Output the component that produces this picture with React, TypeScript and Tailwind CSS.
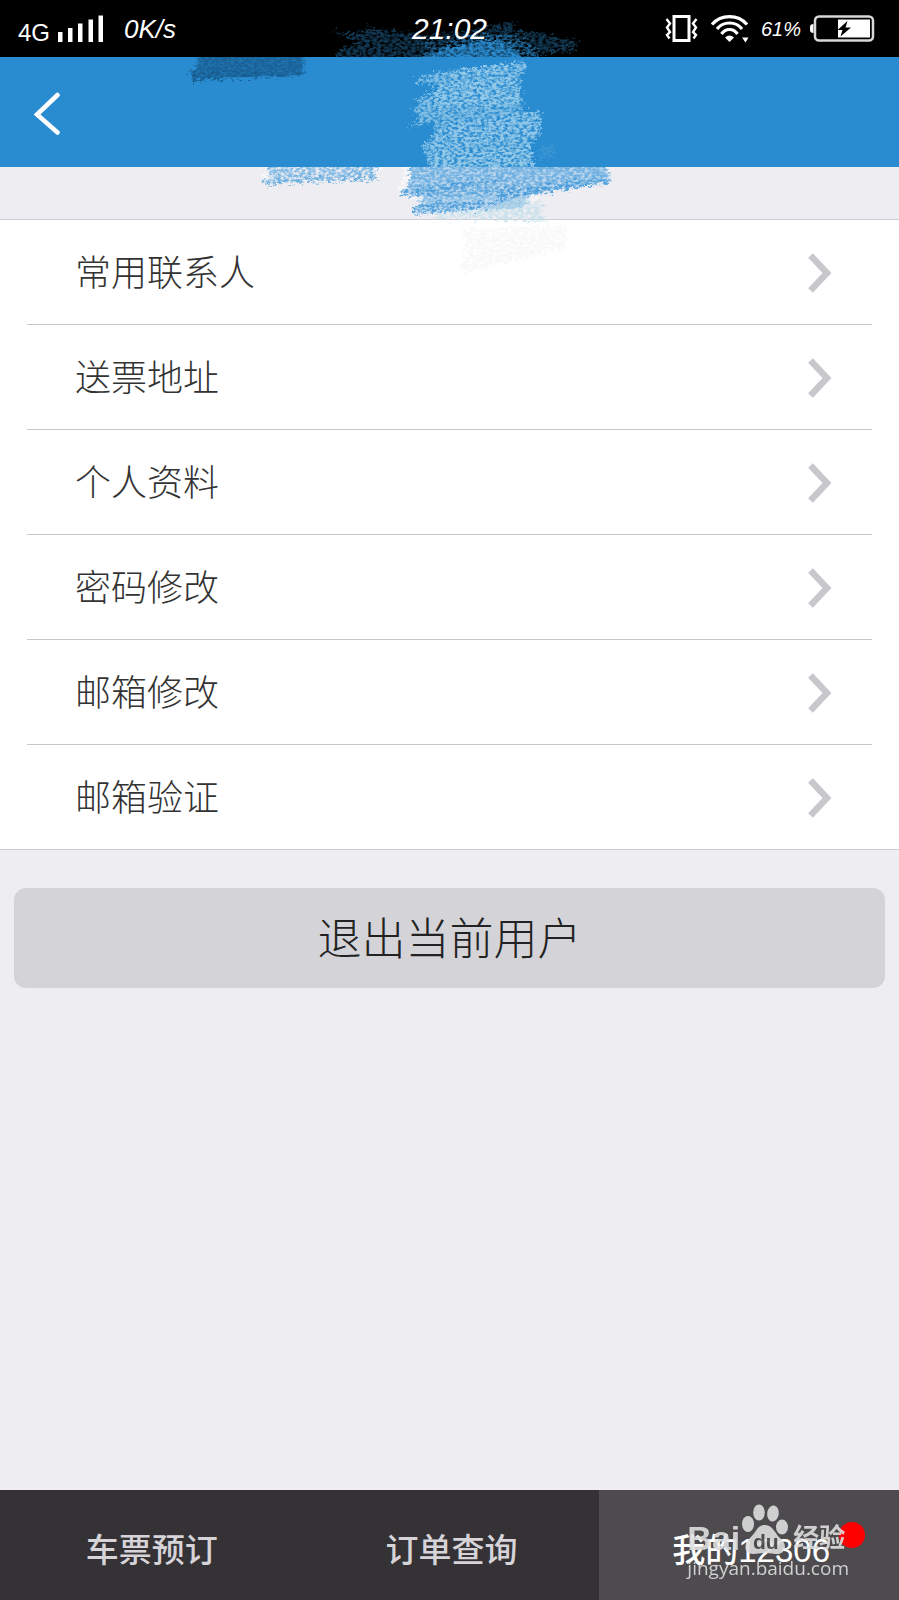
import React from 'react';

const MENU_ITEMS = ['常用联系人', '送票地址', '个人资料', '密码修改', '邮箱修改', '邮箱验证'];

const TABS = [
  { label: '车票预订', active: false },
  { label: '订单查询', active: false },
  { label: '我的12306', active: true },
];

function SignalIcon() {
  return (
    <svg width="46" height="28" viewBox="0 0 46 28" fill="#fff" aria-hidden="true">
      <rect x="0" y="17" width="4.5" height="10" />
      <rect x="10" y="13" width="4.5" height="14" />
      <rect x="20" y="8.5" width="4.5" height="18.5" />
      <rect x="30.5" y="4.5" width="4.5" height="22.5" />
      <rect x="40.5" y="0.5" width="4.5" height="26.5" />
    </svg>
  );
}

function VibrateIcon() {
  return (
    <svg width="34" height="28" viewBox="0 0 34 28" fill="none" stroke="#fff" aria-hidden="true">
      <rect x="9" y="1.5" width="15" height="24" strokeWidth="3" />
      <path d="M1.5 4 L5 8.5 L2 12.5 L5 17 L2 20 L4.5 23.5" strokeWidth="2.4" />
      <path d="M31.5 4 L28 8.5 L31 12.5 L28 17 L31 20 L28.5 23.5" strokeWidth="2.4" />
    </svg>
  );
}

function WifiIcon() {
  return (
    <svg width="38" height="28" viewBox="0 0 38 28" fill="none" stroke="#fff" strokeWidth="3.2" aria-hidden="true">
      <path d="M1 9.5 C10 -1 27 -1 36 9.5" />
      <path d="M6 14 C12 6 25 6 31 14" />
      <path d="M10.5 19 C14.5 13 22.5 13 26.5 19" />
      <path d="M14 22.5 Q18.5 18.5 23 22.5 L18.5 27 Z" fill="#fff" stroke="none" />
      <path d="M31 22.5 H37.5 L34.5 27.5 Z" fill="#fff" stroke="none" />
    </svg>
  );
}

function BatteryIcon() {
  return (
    <svg width="66" height="28" viewBox="0 0 66 28" aria-hidden="true">
      <path d="M4.5 9 Q1 9 1 12 V15 Q1 18 4.5 18 Z" fill="#fff" />
      <rect x="6" y="1.5" width="58" height="24" rx="4" fill="#000" stroke="#d8d8d8" strokeWidth="2.5" />
      <rect x="29" y="4.5" width="32" height="18" fill="#fff" />
      <path d="M38.5 6 L28.5 15 H33.5 L31.5 21.5 L42 12.5 H36.5 Z" fill="#000" />
    </svg>
  );
}

function ChevronIcon() {
  return (
    <svg width="26" height="42" viewBox="0 0 26 42" fill="none" stroke="#c8c7cc" strokeWidth="6.5" aria-hidden="true">
      <path d="M2.5 2.5 L19 20 L2.5 37.500" />
    </svg>
  );
}

// Crayon strokes that cover the title
function Scribble() {
  return (
    <svg
      className="pointer-events-none absolute left-1/2 top-0 -translate-x-1/2"
      width="899"
      height="290"
      viewBox="0 0 899 290"
      aria-hidden="true"
    >
      <defs>
        <filter id="crayon" x="-5%" y="-10%" width="110%" height="120%" colorInterpolationFilters="sRGB">
          <feTurbulence type="fractalNoise" baseFrequency="0.26 0.4" numOctaves="3" seed="4" result="noise" />
          <feColorMatrix in="noise" type="matrix" values="0 0 0 0 0  0 0 0 0 0  0 0 0 0 0  0 0 0 3.2 -0.95" result="grain" />
          <feDisplacementMap in="SourceGraphic" in2="noise" scale="14" xChannelSelector="R" yChannelSelector="G" result="rough" />
          <feComposite in="rough" in2="grain" operator="in" result="inked" />
          <feGaussianBlur in="inked" stdDeviation="0.5" />
        </filter>
        <clipPath id="band-status"><rect x="0" y="0" width="899" height="57" /></clipPath>
        <clipPath id="band-header"><rect x="0" y="57" width="899" height="110" /></clipPath>
        <clipPath id="band-gap"><rect x="0" y="167" width="899" height="60" /></clipPath>
      </defs>

      <g clipPath="url(#band-status)">
        <g filter="url(#crayon)" fill="#2a8bd0">
          <path opacity="0.4" d="M330 30 L350 34 L368 28 L432 36 L440 64 L330 64 L340 48 L362 44 Z" />
          <path opacity="0.4" d="M425 36 L470 30 L515 21 L512 30 L540 33 L577 42 L575 51 L540 54 L420 64 Z" />
          <path opacity="0.55" d="M428 56 L444 42 L480 34 L512 36 L535 48 L545 64 L428 64 Z" />
          <path opacity="0.9" d="M424 64 L446 49 L480 40 L506 42 L524 64 Z" />
        </g>
        <path opacity="0.5" fill="#2a8bd0" d="M420 57 L446 49 L482 41 L508 45 L522 57 Z" />
      </g>

      <g clipPath="url(#band-header)">
        <path opacity="0.5" fill="#185d90" d="M197 57 H302 V75 L260 76 L193 78 L190 73 L197 69 Z" />
        <g filter="url(#crayon)" fill="#185d90">
          <path opacity="0.8" d="M197 50 H303 V76 L260 77 L192 81 L188 72 L197 68 Z" />
          <path opacity="0.8" d="M190 73 L230 72 L303 71 V76 L260 77 L192 81 Z" />
        </g>
        <g filter="url(#crayon)" fill="#b4dcf0">
          <path
            opacity="0.65"
            d="M416 78 L438 72 L526 61 L524 70 L518 76 L522 98 L522 112 L541 112 L538 138 L530 144 L533 160 L536 180 H427 V155 L421 148 L433 133 L434 122 L407 127 L420 118 L412 111 L420 102 L413 100 L438 88 L432 84 L416 84 Z"
          />
          <path opacity="0.45" d="M440 72 L526 62 L524 69 L450 78 Z" />
          <path opacity="0.35" d="M436 84 L516 76 L520 104 L430 108 Z" />
          <path opacity="0.3" d="M440 124 L538 114 L536 138 L430 150 Z" />
          <path opacity="0.35" d="M430 152 L530 144 L536 176 H430 Z" />
          <path opacity="0.12" d="M538 146 L556 144 L552 158 L538 160 Z" />
        </g>
      </g>

      <g clipPath="url(#band-gap)">
        <g fill="#fff" filter="url(#crayon)">
          <path opacity="0.6" d="M261 160 H388 L374 180 L300 182 L262 184 Z" />
          <path opacity="0.6" d="M403 160 H612 L608 184 L540 195 L524 210 L412 216 L420 198 L398 196 Z" />
        </g>
        <path fill="#7fbbe6" opacity="0.45" d="M410 167 H604 L607 181 L560 189 L526 194 L522 208 L415 213 L424 196 L402 193 L411 183 Z" />
        <g filter="url(#crayon)" fill="#4398d8">
          <path opacity="0.65" d="M262 158 H378 L375 173 L376 181 L300 182 L262 186 L269 174 Z" />
          <path opacity="0.35" d="M262 179 L376 174 L376 180 L300 182 L262 185 Z" />
          <path opacity="0.65" d="M408 158 H606 L610 183 L565 190 L500 200 L498 194 L430 197 L400 195 L409 184 Z" />
          <path opacity="0.8" d="M400 190 L430 186 L496 178 L500 182 L430 196 L400 195 Z" />
          <path opacity="0.8" d="M498 190 L560 182 L610 179 L609 184 L565 190 L500 200 Z" />
          <path opacity="0.45" d="M420 198 L500 188 L530 188 L526 206 L412 212 Z" />
          <path opacity="0.8" d="M412 205 L450 202 L526 202 L522 208 L470 210 L413 215 Z" />
        </g>
        <path opacity="0.8" filter="url(#crayon)" fill="#c3dfea" d="M433 214 L475 210 L520 198 L546 204 L539 213 L547 222 L500 220 L434 219 Z" />
      </g>

      <path filter="url(#crayon)" fill="#f8f8fa" d="M463 229 L568 225 L566 248 L500 264 L460 274 L465 255 Z" />
    </svg>
  );
}

function StatusBar() {
  return (
    <header className="grid h-[57px] grid-cols-[1fr_auto_1fr] items-center bg-black text-white">
      <div className="flex items-center pl-[18px]">
        <span className="mt-2 text-2xl">4G</span>
        <span className="ml-2"><SignalIcon /></span>
        <span className="ml-5 text-[26px] italic leading-8">0K/s</span>
      </div>
      <time className="relative z-10 text-3xl italic">21:02</time>
      <div className="flex items-center justify-end pr-6">
        <VibrateIcon />
        <span className="ml-3"><WifiIcon /></span>
        <span className="ml-3 mr-2 text-xl italic">61%</span>
        <BatteryIcon />
      </div>
    </header>
  );
}

function Watermark() {
  return (
    <div className="pointer-events-none absolute bottom-5 right-[50px] text-[#dedede] opacity-90">
      <div className="flex items-end">
        <span className="text-[34px] font-bold leading-9">Bai</span>
        <svg width="49" height="52" viewBox="0 0 49 52" fill="currentColor" aria-hidden="true">
          <ellipse cx="8" cy="20" rx="6" ry="8" />
          <ellipse cx="19" cy="8.5" rx="5.8" ry="8" />
          <ellipse cx="33" cy="9.5" rx="5.8" ry="8" transform="rotate(8 33 9.5)" />
          <ellipse cx="42" cy="23" rx="6" ry="7.5" />
          <path d="M25 21 C33 21 35 30 41 35 C48 41 45 50 37 50 C31 50 30 49 25 49 C20 49 18 50 13 50 C4 50 3 40 10 34 C16 29 17 21 25 21 Z" />
          <text x="13" y="45" fontSize="21" fontWeight="bold" fill="#4d4b4e">du</text>
        </svg>
        <span className="ml-1 text-[26px] font-bold leading-9">经验</span>
      </div>
      <div className="font-['Open_Sans',sans-serif] text-[19px] leading-6">jingyan.baidu.com</div>
    </div>
  );
}

export default function App() {
  return (
    <div className="relative flex min-h-screen flex-col bg-[#eeedf2] font-['Liberation_Sans','Noto_Sans_CJK_SC',sans-serif]">
      <StatusBar />

      <div className="flex h-[110px] items-center bg-[#298bd0] px-8">
        <button type="button" aria-label="返回">
          <svg width="30" height="46" viewBox="0 0 30 46" fill="none" stroke="#fff" strokeWidth="4.5" strokeLinecap="round" aria-hidden="true">
            <path d="M25.5 6 L5 25.5 L25.5 43.500" />
          </svg>
        </button>
      </div>

      <main className="flex-1 pt-[52px]">
        <ul className="border-y border-[#cfced3] bg-white px-[27px]">
          {MENU_ITEMS.map(item => (
            <li key={item} className="border-b border-[#c8c7cc] last:border-b-0">
              <a href="#" className="flex h-[104px] items-center justify-between pl-12 pr-[38px] pt-1 text-4xl font-light text-[#333]">
                {item}
                <ChevronIcon />
              </a>
            </li>
          ))}
        </ul>

        <div className="px-[14px] pt-[38px]">
          <button type="button" className="h-[100px] w-full rounded-xl bg-[#d4d3d8] pt-1 text-[44px] font-light text-[#222]">
            退出当前用户
          </button>
        </div>
      </main>

      <nav className="relative grid h-[110px] grid-cols-3 bg-[#353235]">
        {TABS.map(tab => (
          <a
            key={tab.label}
            href="#"
            className={`flex items-center justify-center pl-1 pt-3 text-[33px] font-medium ${
              tab.active ? 'bg-[#4d4b4e] text-white' : 'text-[#d6d4d8]'
            }`}
          >
            {tab.label}
          </a>
        ))}
        <span className="absolute right-[34px] top-8 h-[26px] w-[26px] rounded-full bg-[#f00]" />
        <Watermark />
      </nav>

      <Scribble />
    </div>
  );
}
